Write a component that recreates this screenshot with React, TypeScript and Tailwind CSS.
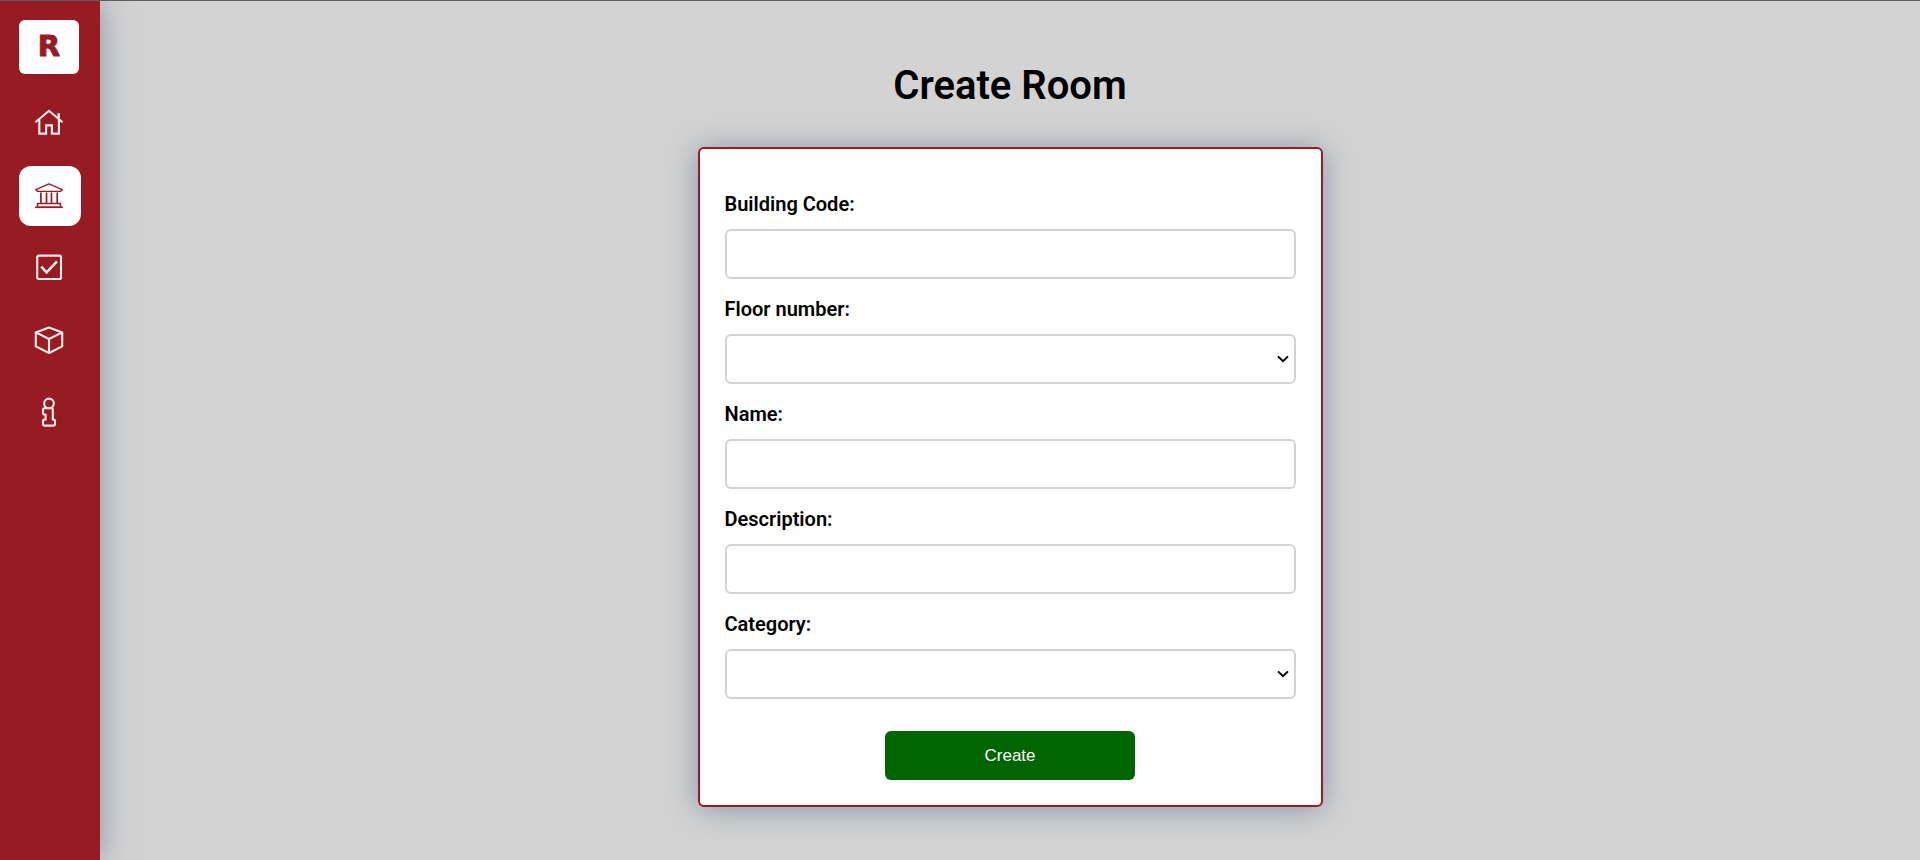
import type { ReactNode } from "react";

const icon = {
  width: 32,
  height: 32,
  viewBox: "0 0 32 32",
  fill: "none",
  stroke: "currentColor",
  "aria-hidden": true,
} as const;

const HomeIcon = () => (
  <svg {...icon} strokeWidth={2.1} strokeLinejoin="miter">
    <path d="M2.4 14.2 16 2.8l13.6 11.4" />
    <path d="M6.3 11.2v14.4h6.8v-8.2h5.8v8.2h7V11.2" />
    <path d="M25.7 10.2V5.2" strokeWidth={2.6} />
  </svg>
);

const BuildingIcon = () => (
  <svg {...icon} strokeWidth={1.4} strokeLinejoin="round">
    <path d="M3 9.6 16 3.9l13 5.7-1.4 1.8H4.4z" />
    <path d="M2.4 9.8h2M27.6 9.8h2" />
    <path d="M7.9 12.6v10.6M13.5 12.6v10.6M18.5 12.6v10.6M24.2 12.6v10.6" strokeWidth={1.7} />
    <path d="M4.6 26.4v-2.9h22.8v2.9" strokeWidth={1.6} />
    <path d="M2.2 27.2h27.6" strokeWidth={1.8} />
  </svg>
);

const CheckIcon = () => (
  <svg {...icon} strokeWidth={2.1}>
    <rect x="4.2" y="3.6" width="23.8" height="23.4" rx="1.6" />
    <path d="m8.2 14.6 5.4 5.8L24 9.4" strokeWidth={2.5} />
  </svg>
);

const BoxIcon = () => (
  <svg {...icon} strokeWidth={2.1} strokeLinejoin="round">
    <path d="M16 3.6 29.2 8.4v14L16 29 2.8 22.4v-14z" />
    <path d="M2.8 8.4 16 15l13.2-6.6M16 15v14" />
  </svg>
);

const InfoIcon = () => (
  <svg {...icon} strokeWidth={2.1} strokeLinejoin="round">
    <circle cx="16" cy="7.4" r="4.8" />
    <path d="M12.4 12.2h6.2a1.2 1.2 0 0 1 1.2 1.2v10.2h.8a1.4 1.4 0 0 1 1.4 1.4v3.2a1.4 1.4 0 0 1-1.4 1.4h-9.2a1.4 1.4 0 0 1-1.4-1.4V25a1.4 1.4 0 0 1 1.4-1.4h1.2v-5h-1.2a1.4 1.4 0 0 1-1.4-1.4v-3.6a1.4 1.4 0 0 1 1.4-1.4z" />
  </svg>
);

const navItems: { label: string; icon: ReactNode; active?: boolean }[] = [
  { label: "Home", icon: <HomeIcon /> },
  { label: "Buildings", icon: <BuildingIcon />, active: true },
  { label: "Tasks", icon: <CheckIcon /> },
  { label: "Items", icon: <BoxIcon /> },
  { label: "Information", icon: <InfoIcon /> },
];

function Sidebar() {
  return (
    <aside className="flex w-[100px] shrink-0 flex-col bg-[#981b23] px-[19px] pt-[19px] shadow-[0_0_30px_rgba(63,85,120,0.5)]">
      <a
        href="#"
        className="flex h-[54px] w-[60px] items-center justify-center rounded-md bg-white font-['DejaVu_Sans',sans-serif] text-[29px] font-bold text-[#981b23] [-webkit-text-stroke:1px_#981b23]"
      >
        R
      </a>
      <nav className="mt-5 flex flex-col gap-3">
        {navItems.map((item) => (
          <a
            key={item.label}
            href="#"
            aria-label={item.label}
            className={
              item.active
                ? "flex h-[60px] w-[62px] items-center rounded-xl bg-white pl-[14px] text-[#981b23]"
                : "flex h-[60px] w-[62px] items-center rounded-xl pl-[14px] text-[#f5ecec]"
            }
          >
            {item.icon}
          </a>
        ))}
      </nav>
    </aside>
  );
}

const control = "h-[50px] w-full rounded-md border-2 border-[#d3d3d3] bg-white px-3 text-base text-black";

function Field({ id, label, select }: { id: string; label: string; select?: boolean }) {
  return (
    <div className="flex flex-col pt-[18px]">
      <label htmlFor={id} className="mb-[13px] text-xl leading-6 font-semibold">
        {label}
      </label>
      {select ? (
        <div className="grid items-center">
          <select id={id} defaultValue="" className={`${control} col-start-1 row-start-1 appearance-none`}>
            <option value=""></option>
          </select>
          <svg
            width="12"
            height="8"
            viewBox="0 0 12 8"
            fill="none"
            stroke="currentColor"
            strokeWidth={2}
            aria-hidden
            className="pointer-events-none col-start-1 row-start-1 mr-[7px] justify-self-end"
          >
            <path d="m1 1.4 5 4.8 5-4.8" />
          </svg>
        </div>
      ) : (
        <input id={id} type="text" className={control} />
      )}
    </div>
  );
}

export default function App() {
  return (
    <div className="flex min-h-screen border-t border-[#5f5f5f] bg-[#d3d3d3] font-[Roboto,sans-serif] text-black">
      <Sidebar />
      <main className="flex flex-1 flex-col items-center px-6 pt-[61px] pb-10">
        <h1 className="text-[40px] leading-[48px] font-semibold">Create Room</h1>
        <form
          onSubmit={(e) => e.preventDefault()}
          className="mt-[37px] flex w-full max-w-[625px] flex-col rounded-md border-2 border-[#981b23] bg-white p-[25px] shadow-[0_2px_30px_rgba(63,85,120,0.5)]"
        >
          <Field id="building" label="Building Code:" />
          <Field id="floor" label="Floor number:" select />
          <Field id="name" label="Name:" />
          <Field id="description" label="Description:" />
          <Field id="category" label="Category:" select />
          <button
            type="submit"
            className="mt-8 h-[49px] w-[250px] self-center rounded-md bg-[#006400] font-['Liberation_Sans',Arial,sans-serif] text-[17px] text-white"
          >
            Create
          </button>
        </form>
      </main>
    </div>
  );
}
